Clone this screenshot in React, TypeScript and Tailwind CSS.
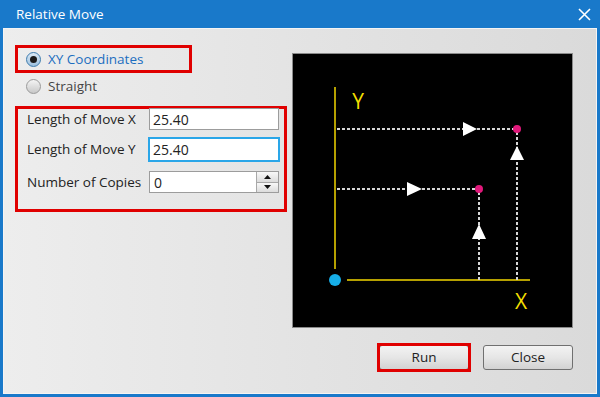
import React from 'react';

const font = { fontFamily: '"Open Sans", "Noto Sans", sans-serif' };

const Radio: React.FC<{ checked?: boolean; label: string }> = ({ checked, label }) => (
  <div className="flex items-center h-[22px]">
    <span
      className={`w-[15px] h-[15px] rounded-full border flex items-center justify-center ${
        checked
          ? 'border-[#3d7bad] bg-gradient-to-b from-[#dbe9f5] to-[#9cc0de]'
          : 'border-[#9a9a9a] bg-gradient-to-b from-[#f4f4f4] to-[#c8c8c8]'
      }`}
    >
      {checked && <span className="w-[7px] h-[7px] rounded-full bg-[#1b1b1b]" />}
    </span>
    <span className={`ml-[7px] text-[13.5px] ${checked ? 'text-[#1c6ec0]' : 'text-[#444]'}`}>{label}</span>
  </div>
);

const Diagram: React.FC = () => (
  <svg width="279" height="273" viewBox="0 0 279 273">
    <rect width="279" height="273" fill="#000" />
    {/* axes */}
    <line x1="42" y1="33" x2="42" y2="215" stroke="#b5a000" strokeWidth="2" />
    <line x1="54" y1="226" x2="237" y2="226" stroke="#b5a000" strokeWidth="2" />
    <text x="65" y="55" fill="#f2de00" fontSize="21" textAnchor="middle" fontFamily="Open Sans, sans-serif">Y</text>
    <text x="228" y="255" fill="#f2de00" fontSize="21" textAnchor="middle" fontFamily="Open Sans, sans-serif">X</text>
    {/* dotted paths */}
    <g stroke="#d6d6d6" strokeWidth="2" strokeDasharray="3 2">
      <line x1="44" y1="75" x2="224" y2="75" />
      <line x1="224" y1="226" x2="224" y2="75" />
      <line x1="44" y1="135" x2="186" y2="135" />
      <line x1="186" y1="226" x2="186" y2="135" />
    </g>
    {/* arrows */}
    <g fill="#fff">
      <polygon points="170,68 184,75 170,82" />
      <polygon points="114,128 129,135 114,142" />
      <polygon points="217,106 224,92 231,106" />
      <polygon points="179,185 186,170 193,185" />
    </g>
    <circle cx="224" cy="75" r="4" fill="#e0187a" />
    <circle cx="186" cy="135" r="4" fill="#e0187a" />
    <circle cx="42" cy="226" r="6" fill="#16aee8" />
  </svg>
);

const App: React.FC = () => {
  return (
    <div className="w-[600px] h-[397px] bg-[#1979ca] flex flex-col" style={font}>
      {/* Title bar */}
      <div className="h-[28px] flex items-center justify-between pl-[16px] pr-[8px] text-white">
        <span className="text-[13.5px]">Relative Move</span>
        <svg width="13" height="13" viewBox="0 0 13 13" className="mr-[1px]">
          <path d="M1 1 L12 12 M12 1 L1 12" stroke="#fff" strokeWidth="1.6" />
        </svg>
      </div>

      {/* Body */}
      <div className="flex-1 mx-[3px] mb-[3px] border border-[#f4f4f4] bg-gradient-to-r from-[#ededed] to-[#dadada] flex flex-col pl-[11px] pr-[23px]">
        <div className="flex items-start">
          {/* left column */}
          <div className="w-[272px] pt-[16px]">
            <div className="w-[177px] h-[28px] border-[3px] border-[#e00000] pl-[8px] flex items-center">
              <Radio checked label="XY Coordinates" />
            </div>
            <div className="pl-[11px] mt-[2px]">
              <Radio label="Straight" />
            </div>

            <div className="mt-[9px] h-[106px] border-[3px] border-[#e00000] pl-[9px] pr-[5px] text-[13.5px] text-[#222]">
              <div className="flex items-center justify-between h-[22px] -mt-[1px]">
                <span>Length of Move X</span>
                <div className="w-[130px] h-[22px] bg-white border border-[#9c9c9c] pl-[3px] text-[14px] flex items-center">25.40</div>
              </div>
              <div className="flex items-center justify-between h-[25px] mt-[7px]">
                <span>Length of Move Y</span>
                <div className="w-[132px] h-[25px] -mr-[1px] bg-white border-2 border-[#2aa6e8] pl-[3px] text-[14px] flex items-center">25.40</div>
              </div>
              <div className="flex items-center justify-between h-[22px] mt-[9px]">
                <span>Number of Copies</span>
                <div className="w-[130px] h-[22px] bg-white border border-[#9c9c9c] flex items-stretch text-[14px]">
                  <div className="flex-1 pl-[4px] flex items-center">0</div>
                  <div className="w-[22px] flex flex-col border-l border-[#a8a8a8]">
                    <div className="flex-1 flex items-center justify-center bg-gradient-to-b from-[#f8f8f8] to-[#dcdcdc] border-b border-[#a8a8a8]">
                      <svg width="7" height="4" viewBox="0 0 7 4"><polygon points="0,4 3.5,0 7,4" fill="#111" /></svg>
                    </div>
                    <div className="flex-1 flex items-center justify-center bg-gradient-to-b from-[#f8f8f8] to-[#dcdcdc]">
                      <svg width="7" height="4" viewBox="0 0 7 4"><polygon points="0,0 3.5,4 7,0" fill="#111" /></svg>
                    </div>
                  </div>
                </div>
              </div>
            </div>
          </div>

          {/* diagram */}
          <div className="ml-[5px] mt-[24px] border border-[#8a8a8a]">
            <Diagram />
          </div>
        </div>

        {/* buttons */}
        <div className="flex justify-end mt-[17px] gap-[14px] text-[13.5px] text-[#222]">
          <div className="relative">
            <button className="w-[90px] h-[25px] rounded-[3px] border border-[#707070] bg-gradient-to-b from-[#f3f3f3] via-[#e6e6e6] to-[#d2d2d2]">
              Run
            </button>
            <div className="absolute -inset-[2px] border-[3px] border-[#e00000]" />
          </div>
          <button className="w-[90px] h-[25px] rounded-[3px] border border-[#707070] bg-gradient-to-b from-[#f3f3f3] via-[#e6e6e6] to-[#d2d2d2]">
            Close
          </button>
        </div>
      </div>
    </div>
  );
};

export default App;
